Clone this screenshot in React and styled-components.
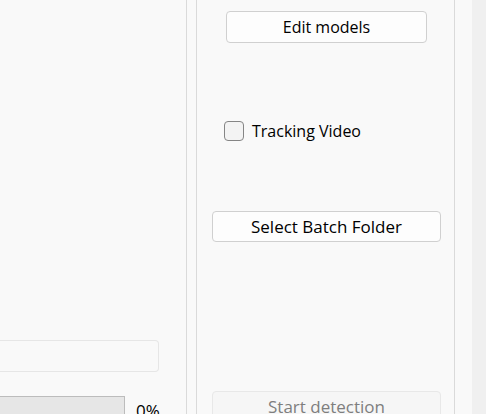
import React from "react";
import styled, { createGlobalStyle } from "styled-components";

const GlobalStyle = createGlobalStyle`
  html, body {
    margin: 0;
    padding: 0;
    background: #f9f9f9;
  }
  body {
    font-family: "Open Sans", "Noto Sans", "DejaVu Sans", sans-serif;
    font-size: 17px;
    color: #000;
  }
`;

const Window = styled.div`
  display: flex;
  width: 486px;
  height: 414px;
  overflow: hidden;
  background: #f9f9f9;
`;

const LeftPane = styled.div`
  width: 187px;
  flex-shrink: 0;
  border-right: 1px solid #dadada;
  display: flex;
  flex-direction: column;
  align-items: flex-start;
  padding-top: 340px;
  box-sizing: border-box;
  overflow: hidden;
`;

const PathInput = styled.div`
  width: 159px;
  height: 32px;
  flex-shrink: 0;
  box-sizing: border-box;
  border: 1px solid #e6e6e6;
  border-left: none;
  border-radius: 0 4px 4px 0;
  background: #f9f9f9;
`;

const ProgressRow = styled.div`
  display: flex;
  align-items: flex-start;
  gap: 11px;
  margin-top: 24px;
  flex-shrink: 0;
`;

const ProgressBar = styled.div`
  width: 125px;
  height: 24px;
  flex-shrink: 0;
  box-sizing: border-box;
  border: 1px solid #bcbcbc;
  border-left: none;
  background: #e6e6e6;
`;

const Percent = styled.span`
  font-size: 17px;
  line-height: 22px;
  margin-top: 4px;
`;

const GroupBox = styled.div`
  width: 259px;
  flex-shrink: 0;
  margin-left: 9px;
  border-left: 1px solid #dadada;
  border-right: 1px solid #dadada;
  box-sizing: border-box;
  display: flex;
  flex-direction: column;
  padding-top: 11px;
`;

const Button = styled.button`
  display: block;
  flex-shrink: 0;
  height: ${(p) => p.$h || 32}px;
  width: ${(p) => p.$w}px;
  margin-left: ${(p) => p.$left}px;
  margin-top: ${(p) => p.$top || 0}px;
  padding: 0;
  box-sizing: border-box;
  border: 1px solid ${(p) => (p.disabled ? "#e8e8e8" : "#d0d0d0")};
  border-radius: 4px;
  background: ${(p) => (p.disabled ? "#f6f6f6" : "#fdfdfd")};
  color: ${(p) => (p.disabled ? "#7e7e7e" : "#000")};
  font-family: inherit;
  font-size: ${(p) => p.$fs || 17}px;
  line-height: 22px;
`;

const CheckRow = styled.label`
  display: flex;
  align-items: center;
  flex-shrink: 0;
  gap: 8px;
  margin-left: 27px;
  margin-top: 78px;
  height: 20px;
  font-size: 16px;
`;

const CheckBox = styled.span`
  width: 20px;
  height: 20px;
  box-sizing: border-box;
  border: 1px solid #858585;
  border-radius: 4px;
  background: #f3f3f3;
`;

const Spacer = styled.div`
  width: 17px;
  flex-shrink: 0;
`;

const Strip = styled.div`
  flex: 1;
  background: #f0f0f0;
`;

export default function App() {
  return (
    <>
      <GlobalStyle />
      <Window>
        <LeftPane>
          <PathInput />
          <ProgressRow>
            <ProgressBar />
            <Percent>0%</Percent>
          </ProgressRow>
        </LeftPane>
        <GroupBox>
          <Button $w={201} $left={29} $fs={16}>Edit models</Button>
          <CheckRow>
            <CheckBox />
            Tracking Video
          </CheckRow>
          <Button $w={229} $left={15} $top={70} $h={31}>
            Select Batch Folder
          </Button>
          <Button $w={229} $left={15} $top={149} disabled>
            Start detection
          </Button>
        </GroupBox>
        <Spacer />
        <Strip />
      </Window>
    </>
  );
}
